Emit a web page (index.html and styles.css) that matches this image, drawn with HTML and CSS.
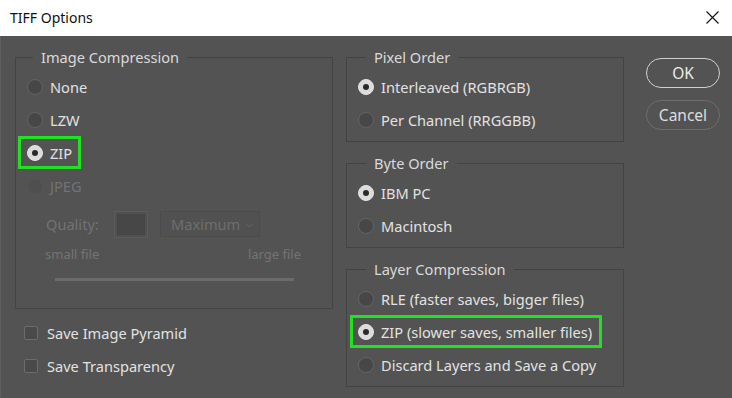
FILE: index.html
```html
<!DOCTYPE html>
<html>
<head>
<meta charset="utf-8">
<link rel="stylesheet" href="styles.css">
</head>
<body>
<div class="window">
  <div class="titlebar">
    <span class="title">TIFF Options</span>
    <svg class="close" width="13" height="13" viewBox="0 0 13 13"><path d="M0.5 0.5 L12.5 12.5 M12.5 0.5 L0.5 12.5" stroke="#111" stroke-width="1.1" fill="none"/></svg>
  </div>
  <div class="content">
    <div class="col-left">
      <fieldset class="group group-left">
        <legend>Image Compression</legend>
        <div class="radio"><span class="dot"></span><span>None</span></div>
        <div class="radio"><span class="dot"></span><span>LZW</span></div>
        <div class="radio hl hl-left"><span class="dot on"></span><span>ZIP</span></div>
        <div class="radio disabled"><span class="dot"></span><span>JPEG</span></div>
        <div class="quality">
          <span class="q-label">Quality:</span>
          <span class="q-box"></span>
          <span class="q-select">Maximum<svg class="chev" width="7" height="5" viewBox="0 0 7 5"><path d="M0.5 1 L3.5 4 L6.5 1" stroke="#666" stroke-width="1" fill="none"/></svg></span>
        </div>
        <div class="sizes"><span>small file</span><span>large file</span></div>
        <div class="track"></div>
      </fieldset>
      <div class="checks">
        <div class="check"><span class="box"></span><span>Save Image Pyramid</span></div>
        <div class="check"><span class="box"></span><span>Save Transparency</span></div>
      </div>
    </div>
    <div class="col-right">
      <fieldset class="group">
        <legend>Pixel Order</legend>
        <div class="radio"><span class="dot on"></span><span>Interleaved (RGBRGB)</span></div>
        <div class="radio"><span class="dot"></span><span>Per Channel (RRGGBB)</span></div>
      </fieldset>
      <fieldset class="group">
        <legend>Byte Order</legend>
        <div class="radio"><span class="dot on"></span><span>IBM PC</span></div>
        <div class="radio"><span class="dot"></span><span>Macintosh</span></div>
      </fieldset>
      <fieldset class="group">
        <legend>Layer Compression</legend>
        <div class="radio"><span class="dot"></span><span>RLE (faster saves, bigger files)</span></div>
        <div class="radio hl hl-right"><span class="dot on"></span><span>ZIP (slower saves, smaller files)</span></div>
        <div class="radio"><span class="dot"></span><span>Discard Layers and Save a Copy</span></div>
      </fieldset>
    </div>
    <div class="col-buttons">
      <button class="btn btn-ok">OK</button>
      <button class="btn">Cancel</button>
    </div>
  </div>
</div>
</body>
</html>
```
FILE: styles.css
```css
* { box-sizing: border-box; }
html, body { margin: 0; padding: 0; }
body {
  width: 732px;
  height: 398px;
  overflow: hidden;
  background: #535353;
  font-family: "Noto Sans", "Open Sans", sans-serif;
  font-size: 14.6px;
  color: #e2e2e2;
}
.window { width: 732px; height: 398px; display: flex; flex-direction: column; }
.titlebar {
  height: 36px;
  background: #ffffff;
  display: flex;
  align-items: center;
  justify-content: space-between;
  padding: 0 13px 2px 10px;
  color: #111;
  font-size: 14px;
}
.close { display: block; }
.content {
  flex: 1;
  display: flex;
  padding: 11px 0 0 14px;
  border-left: 1px solid #5e5e5e;
}
.col-left { width: 318px; display: flex; flex-direction: column; }
.col-right { width: 278px; margin-left: 13px; display: flex; flex-direction: column; gap: 11px; }
.col-buttons { width: 74px; margin-left: 22px; padding-top: 11px; display: flex; flex-direction: column; gap: 12px; }

.group {
  margin: 0;
  padding: 3px 0 5px 0;
  min-width: 0;
  border: 1px solid #434343;
}
.group legend {
  margin-left: 19px;
  padding: 0 8px;
  line-height: 20px;
  height: 20px;
  color: #dadada;
}
.group-left { height: 262px; }
.group-left legend { margin-left: 17px; }

.radio {
  height: 33px;
  display: flex;
  align-items: center;
  gap: 7px;
  padding-left: 11px;
  white-space: nowrap;
}
.dot {
  width: 16px;
  height: 16px;
  border-radius: 50%;
  background: #474747;
  border: 1px solid #646464;
  flex: none;
  display: flex;
  align-items: center;
  justify-content: center;
}
.dot.on { background: #dcdcdc; border-color: #e4e4e4; }
.dot.on::after {
  content: "";
  width: 6px;
  height: 6px;
  border-radius: 50%;
  background: #2a2a2a;
}
.radio.disabled { color: #727272; }
.radio.disabled .dot { background: #4f4f4f; border-color: #555; }

.hl { border: 3px solid #22e022; width: fit-content; }
.hl-left { margin-left: 2px; padding-left: 6px; padding-right: 6px; }
.hl-right { margin-left: 3px; padding-left: 5px; padding-right: 7px; }

.quality {
  height: 28px;
  margin-top: 8px;
  display: flex;
  align-items: center;
  padding-left: 30px;
  color: #727272;
}
.q-label { width: 68px; }
.q-box {
  width: 34px;
  height: 27px;
  border: 1px solid #5c5c5c;
  background: #474747;
  box-shadow: inset 0 0 0 2px #505050;
}
.q-select {
  margin-left: 12px;
  width: 100px;
  height: 26px;
  border: 1px solid #4c4c4c;
  background: #515151;
  display: flex;
  align-items: center;
  justify-content: space-between;
  padding: 0 6px 0 10px;
  color: #6e6e6e;
}
.chev { display: block; margin-top: 2px; }
.sizes {
  height: 20px;
  margin-top: 7px;
  display: flex;
  justify-content: space-between;
  padding: 0 31px 0 29px;
  color: #737373;
  font-size: 13px;
}
.track {
  margin: 13px 0 0 39px;
  width: 239px;
  height: 3px;
  background: #6b6b6b;
}

.checks { margin-top: 7px; }
.check {
  height: 33px;
  display: flex;
  align-items: center;
  gap: 9px;
  padding-left: 9px;
}
.box {
  width: 14px;
  height: 14px;
  border: 1px solid #6c6c6c;
  background: #4a4a4a;
  border-radius: 2px;
}

.btn {
  width: 74px;
  height: 30px;
  border-radius: 15px;
  background: #535353;
  border: 1px solid #6e6e6e;
  color: #dedede;
  font-family: "Noto Sans", "Open Sans", sans-serif;
  font-size: 15.5px;
  padding: 0 0 1px 0;
}
.btn-ok { border: 1.5px solid #d0d0d0; color: #ececec; }
```
